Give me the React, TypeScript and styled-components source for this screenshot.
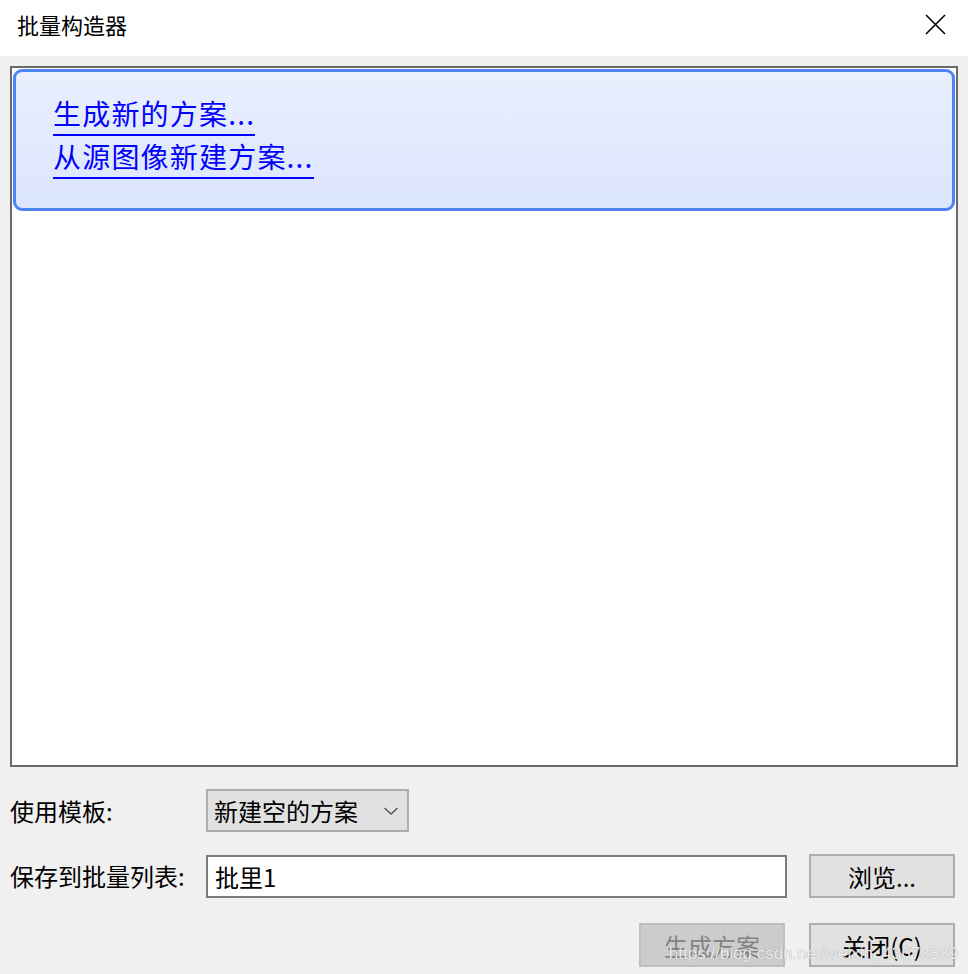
import React from 'react';
import styled, { createGlobalStyle } from 'styled-components';

const GlobalStyle = createGlobalStyle`
  html, body {
    margin: 0;
    padding: 0;
    background: #f0f0f0;
  }
  body {
    font-family: "Noto Sans CJK SC", "Microsoft YaHei", sans-serif;
    color: #000;
  }
`;

const Window = styled.div`
  position: relative;
  width: 968px;
  height: 974px;
  display: flex;
  flex-direction: column;
  background: #f0f0f0;
  overflow: hidden;
`;

const TitleBar = styled.div`
  height: 56px;
  flex: none;
  background: #fff;
  display: flex;
  align-items: center;
  justify-content: space-between;
  padding: 0 22px 8px 17px;
  box-sizing: border-box;
`;

const Title = styled.span`
  font-size: 22px;
  line-height: 24px;
`;

const CloseIcon = styled.svg`
  width: 21px;
  height: 21px;
`;

const Body = styled.div`
  flex: 1;
  padding: 10px 10px 0 10px;
  display: flex;
  flex-direction: column;
`;

const ListBox = styled.div`
  height: 701px;
  box-sizing: border-box;
  border: 2px solid #6a6a6a;
  background: #fff;
  padding: 1px;
`;

const TaskCard = styled.div`
  height: 142px;
  box-sizing: border-box;
  border: 3px solid #4f84f6;
  border-radius: 9px;
  background: linear-gradient(to bottom, #e9effe, #dbe5fd);
  padding: 21px 0 0 37px;
  display: flex;
  flex-direction: column;
  align-items: flex-start;
`;

const TaskLink = styled.a`
  display: block;
  font-size: 28px;
  line-height: 41px;
  letter-spacing: 1.2px;
  color: #0000ff;
  text-decoration: none;
  border-bottom: 2px solid #0000ff;
  cursor: pointer;
`;

const Form = styled.div`
  margin-top: 22px;
  display: flex;
  flex-direction: column;
  padding-right: 3px;
`;

const Row = styled.div<{ $gap: number }>`
  display: flex;
  align-items: center;
  margin-bottom: ${(p) => p.$gap}px;
`;

const Label = styled.span`
  width: 196px;
  flex: none;
  font-size: 24px;
  line-height: 26px;
`;

const Select = styled.div`
  width: 203px;
  height: 43px;
  box-sizing: border-box;
  border: 2px solid #adadad;
  background: #e1e1e1;
  display: flex;
  align-items: center;
  justify-content: space-between;
  padding: 0 8px 0 6px;
  font-size: 24px;
`;

const TextInput = styled.div`
  width: 581px;
  height: 43px;
  box-sizing: border-box;
  border: 2px solid #7a7a7a;
  background: #fff;
  display: flex;
  align-items: center;
  padding: 0 7px;
  font-size: 24px;
`;

const Button = styled.div<{ $disabled?: boolean }>`
  width: 146px;
  height: 44px;
  box-sizing: border-box;
  border: 2px solid ${(p) => (p.$disabled ? '#bfbfbf' : '#adadad')};
  background: ${(p) => (p.$disabled ? '#cccccc' : '#e1e1e1')};
  color: ${(p) => (p.$disabled ? '#838383' : '#000')};
  display: flex;
  align-items: center;
  justify-content: center;
  font-size: 24px;
  flex: none;
`;

const Spacer = styled.div`
  flex: 1;
`;

const ButtonBar = styled.div`
  display: flex;
  justify-content: flex-end;
  gap: 24px;
`;

const Watermark = styled.span`
  position: absolute;
  right: 10px;
  bottom: 10px;
  font-family: "Liberation Sans", Arial, sans-serif;
  font-size: 17px;
  color: rgba(255, 255, 255, 0.85);
  text-shadow: 0 0 1px rgba(80, 80, 80, 0.6);
  pointer-events: none;
`;

function Chevron() {
  return (
    <svg width="16" height="10" viewBox="0 0 16 10">
      <path d="M1.5 2 L8 8 L14.5 2" fill="none" stroke="#555" strokeWidth="1.4" />
    </svg>
  );
}

export default function App() {
  return (
    <Window>
      <GlobalStyle />
      <TitleBar>
        <Title>批量构造器</Title>
        <CloseIcon viewBox="0 0 21 21">
          <path d="M1 1 L20 20 M20 1 L1 20" stroke="#000" strokeWidth="1.6" />
        </CloseIcon>
      </TitleBar>
      <Body>
        <ListBox>
          <TaskCard>
            <TaskLink>生成新的方案...</TaskLink>
            <TaskLink>从源图像新建方案...</TaskLink>
          </TaskCard>
        </ListBox>
        <Form>
          <Row $gap={22}>
            <Label>使用模板:</Label>
            <Select>
              <span>新建空的方案</span>
              <Chevron />
            </Select>
          </Row>
          <Row $gap={25}>
            <Label>保存到批量列表:</Label>
            <TextInput>批里1</TextInput>
            <Spacer />
            <Button>浏览...</Button>
          </Row>
          <ButtonBar>
            <Button $disabled>生成方案</Button>
            <Button>关闭(C)</Button>
          </ButtonBar>
        </Form>
      </Body>
      <Watermark>https://blog.csdn.net/weixin_43673589</Watermark>
    </Window>
  );
}
